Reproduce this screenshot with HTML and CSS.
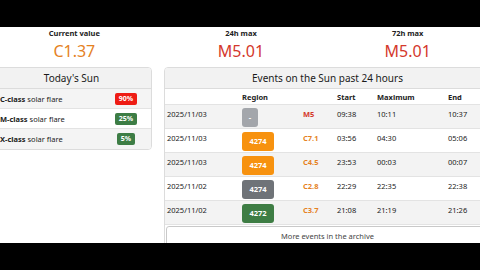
FILE: index.html
```html
<!DOCTYPE html>
<html lang="en">
<head>
<meta charset="utf-8">
<link rel="stylesheet" href="styles.css">
</head>
<body>
<div class="screen">
  <div class="bar"></div>
  <main class="page">
    <section class="stats">
      <div class="stat"><div class="stat-label">Current value</div><div class="stat-value cls-c">C1.37</div></div>
      <div class="stat"><div class="stat-label">24h max</div><div class="stat-value cls-m">M5.01</div></div>
      <div class="stat"><div class="stat-label">72h max</div><div class="stat-value cls-m">M5.01</div></div>
    </section>
    <section class="cards">
      <div class="card sun">
        <div class="card-head">Today's Sun</div>
        <div class="sun-row"><span><b>C-class</b> solar flare</span><span class="pct-cell"><span class="pct red">90%</span></span></div>
        <div class="sun-row"><span><b>M-class</b> solar flare</span><span class="pct-cell"><span class="pct green">25%</span></span></div>
        <div class="sun-row"><span><b>X-class</b> solar flare</span><span class="pct-cell"><span class="pct green">5%</span></span></div>
      </div>
      <div class="card events">
        <div class="card-head">Events on the Sun past 24 hours</div>
        <div class="ev-row ev-head"><span></span><span>Region</span><span></span><span>Start</span><span>Maximum</span><span>End</span></div>
        <div class="ev-row"><span>2025/11/03</span><span><span class="reg none">-</span></span><span class="cls-m">M5</span><span>09:38</span><span>10:11</span><span>10:37</span></div>
        <div class="ev-row"><span>2025/11/03</span><span><span class="reg orange">4274</span></span><span class="cls-c">C7.1</span><span>03:56</span><span>04:30</span><span>05:06</span></div>
        <div class="ev-row"><span>2025/11/03</span><span><span class="reg orange">4274</span></span><span class="cls-c">C4.5</span><span>23:53</span><span>00:03</span><span>00:07</span></div>
        <div class="ev-row"><span>2025/11/02</span><span><span class="reg gray">4274</span></span><span class="cls-c">C2.8</span><span>22:29</span><span>22:35</span><span>22:38</span></div>
        <div class="ev-row"><span>2025/11/02</span><span><span class="reg green">4272</span></span><span class="cls-c">C3.7</span><span>21:08</span><span>21:19</span><span>21:26</span></div>
        <div class="more">More events in the archive</div>
      </div>
    </section>
  </main>
  <div class="bar"></div>
</div>
</body>
</html>
```

FILE: styles.css
```css
* { box-sizing: border-box; }
html, body { margin: 0; padding: 0; background: #000; }
body { font-family: "Noto Sans", "Open Sans", sans-serif; color: #222; }
.screen { width: 480px; height: 270px; display: flex; flex-direction: column; overflow: hidden; }
.bar { height: 27px; background: #000; flex: none; }
.page { height: 216px; background: #fff; overflow: hidden; flex: none; }
.stats { display: grid; grid-template-columns: repeat(3, 1fr); width: 500px; margin-left: -9px; height: 40px; padding-top: 1px; }
.stat { text-align: center; }
.stat-label { font-size: 7.5px; font-weight: 700; line-height: 10px; color: #222; }
.stat-value { font-size: 16px; line-height: 22px; margin-top: 2px; }
.cls-c { color: #e5821f; }
.cls-m { color: #d4382c; }
.cards { display: grid; grid-template-columns: 161px 327px; gap: 12px; margin-left: -9px; align-items: start; }
.card { border: 1px solid #dcdcdc; border-radius: 4px; background: #fff; overflow: hidden; }
.card-head { height: 21px; background: #f2f2f2; border-bottom: 1px solid #dcdcdc; font-size: 10px; line-height: 20px; text-align: center; color: #1a1a1a; }
.sun-row { height: 20px; display: flex; align-items: center; justify-content: space-between; padding: 0 10px 0 8px; font-size: 7.5px; border-bottom: 1px solid #e3e3e3; }
.sun-row:nth-child(2), .sun-row:nth-child(4) { background: #f4f4f4; }
.sun-row:last-child { border-bottom: none; height: 20px; }
.pct-cell { width: 30px; display: flex; justify-content: center; }
.pct { display: inline-block; padding: 0 4px; height: 12px; line-height: 12px; border-radius: 2px; color: #fff; font-size: 7px; font-weight: 700; }
.pct.red { background: #ee1c14; }
.pct.green { background: #3d7d45; }
.events { height: 200px; }
.ev-row { display: grid; grid-template-columns: 75px 61px 34px 40px 71px 1fr; height: 24px; font-size: 7.5px; line-height: 10px; padding-left: 2px; border-bottom: 1px solid #e3e3e3; }
.ev-row > span { padding-top: 4px; }
.ev-row:nth-child(odd) { background: #f3f3f3; }
.ev-head { height: 16px; font-weight: 700; background: #fff; }
.ev-head > span { padding-top: 3px; }
.ev-row .cls-c, .ev-row .cls-m { font-weight: 700; }
.reg { display: inline-block; height: 19px; line-height: 19px; border-radius: 3px; color: #fff; font-weight: 700; font-size: 7.5px; text-align: center; width: 32px; margin-top: -1px; }
.reg.none { width: 16px; background: #a3a6ab; }
.reg.orange { background: #f7920f; }
.reg.gray { background: #6f7378; }
.reg.green { background: #3e7d44; }
.more { margin: 1px 1px 0 1px; height: 22px; border: 1px solid #c9c9c9; border-radius: 3px; text-align: center; font-size: 7.5px; line-height: 18px; color: #444; }
```
